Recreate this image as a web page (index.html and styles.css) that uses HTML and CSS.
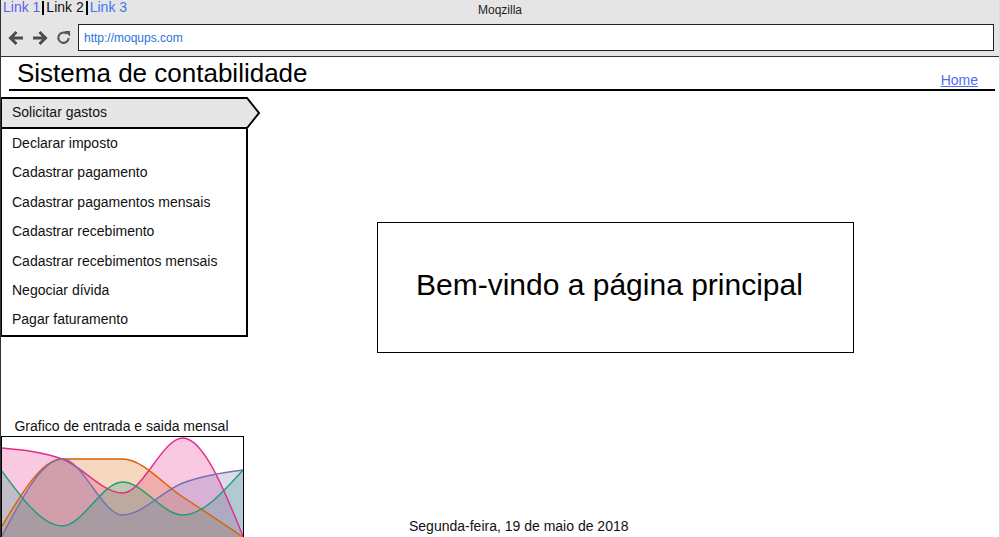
FILE: index.html
```html
<!DOCTYPE html>
<html lang="pt">
<head>
    <meta charset="UTF-8">
    <title>Sistema de contabilidade</title>
    <link rel="stylesheet" href="styles.css">
</head>
<body>

<div class="window">
    <div class="chrome">
        <div class="chrome-top">
            <div class="tabs">
                <a href="#" class="tab tab-visited">Link 1</a><span class="sep"></span><span class="tab tab-current">Link 2</span><span class="sep"></span><a href="#" class="tab">Link 3</a>
            </div>
            <div class="chrome-title">Moqzilla</div>
            <div></div>
        </div>
        <div class="chrome-nav">
            <svg class="nav-icon" viewBox="0 0 16 16"><path d="M8.5 2 L2.5 8 L8.5 14 M2.5 8 H15" fill="none" stroke="#4d4d4d" stroke-width="3"/></svg>
            <svg class="nav-icon" viewBox="0 0 16 16"><path d="M7.5 2 L13.5 8 L7.5 14 M13.5 8 H1" fill="none" stroke="#4d4d4d" stroke-width="3"/></svg>
            <svg class="nav-icon reload" viewBox="0 0 16 16"><path d="M13.5 8.5 A5.5 5.5 0 1 1 11.5 4" fill="none" stroke="#555" stroke-width="2.2"/><polygon points="9,1 15,1 15,7" fill="#555"/></svg>
            <div class="address">http://moqups.com</div>
        </div>
    </div>

    <header class="page-header">
        <h1>Sistema de contabilidade</h1>
        <a href="#" class="home-link">Home</a>
    </header>

    <div class="page-body">
        <aside class="sidebar">
            <div class="menu-active">
                <svg class="menu-shape" viewBox="0 0 260 32"><polygon points="0,1 246,1 258,16 246,31 0,31" fill="#e6e6e6" stroke="#000" stroke-width="2"/></svg>
                <span>Solicitar gastos</span>
            </div>
            <ul class="menu">
                <li>Declarar imposto</li>
                <li>Cadastrar pagamento</li>
                <li>Cadastrar pagamentos mensais</li>
                <li>Cadastrar recebimento</li>
                <li>Cadastrar recebimentos mensais</li>
                <li>Negociar dívida</li>
                <li>Pagar faturamento</li>
            </ul>

            <div class="chart-title">Grafico de entrada e saida mensal</div>
            <div class="chart">
                <svg width="241" height="100" viewBox="0 0 242 100" preserveAspectRatio="none">
                    <!-- areas -->
                    <path class="area pink" d="M0,11 C20.17,12.8 40.33,14.7 60.5,22 C80.67,29.3 100.83,56 121,56 C141.17,56 161.33,1 181.5,1 C201.67,1 221.83,49.5 242,99 L242,100 L0,100 Z"/>
                    <path class="area orange" d="M0,89 C20.17,55.5 40.33,22 60.5,22 C80.67,22 100.83,22 121,22 C141.17,22 161.33,47 181.5,60 C201.67,73 221.83,86.5 242,100 L242,100 L0,100 Z"/>
                    <path class="area green" d="M0,34 C20.17,61.5 40.33,89 60.5,89 C80.67,89 100.83,45 121,45 C141.17,45 161.33,78 181.5,78 C201.67,78 221.83,55.5 242,33 L242,100 L0,100 Z"/>
                    <path class="area purple" d="M0,99 C20.17,60.5 40.33,22 60.5,22 C80.67,22 100.83,78 121,78 C141.17,78 161.33,53.5 181.5,46 C201.67,38.5 221.83,35.7 242,33 L242,100 L0,100 Z"/>
                    <!-- lines -->
                    <path class="line pink" d="M0,11 C20.17,12.8 40.33,14.7 60.5,22 C80.67,29.3 100.83,56 121,56 C141.17,56 161.33,1 181.5,1 C201.67,1 221.83,49.5 242,99"/>
                    <path class="line orange" d="M0,89 C20.17,55.5 40.33,22 60.5,22 C80.67,22 100.83,22 121,22 C141.17,22 161.33,47 181.5,60 C201.67,73 221.83,86.5 242,100"/>
                    <path class="line green" d="M0,34 C20.17,61.5 40.33,89 60.5,89 C80.67,89 100.83,45 121,45 C141.17,45 161.33,78 181.5,78 C201.67,78 221.83,55.5 242,33"/>
                    <path class="line purple" d="M0,99 C20.17,60.5 40.33,22 60.5,22 C80.67,22 100.83,78 121,78 C141.17,78 161.33,53.5 181.5,46 C201.67,38.5 221.83,35.7 242,33"/>
                </svg>
            </div>
        </aside>

        <main class="main">
            <div class="welcome">Bem-vindo a página principal</div>
            <p class="date">Segunda-feira, 19 de maio de 2018</p>
        </main>
    </div>
</div>

</body>
</html>
```

FILE: styles.css
```css
body {
    margin: 0;
    font-family: "Liberation Sans", Arial, sans-serif;
    color: #111;
    background: #fff;
    overflow: hidden;
}
.window {
    height: 537px;
    box-sizing: border-box;
    border-left: 1px solid #333;
    border-right: 1px solid #dcdcdc;
    overflow: hidden;
}

/* browser chrome */
.chrome {
    height: 57px;
    box-sizing: border-box;
    background: #e5e5e5;
    border-bottom: 1px solid #333;
}
.chrome-top {
    display: grid;
    grid-template-columns: 1fr auto 1fr;
    height: 24px;
}
.tabs {
    display: flex;
    align-items: flex-start;
    padding-left: 2px;
    font-size: 14px;
    line-height: 14px;
}
.tab {
    color: #3c78f4;
    text-decoration: none;
}
.tab-visited {
    color: #5d5ff0;
}
.tab-current {
    color: #111;
}
.sep {
    width: 2px;
    height: 14px;
    background: #000;
    margin: 1px 2px 0;
}
.chrome-title {
    font-size: 12px;
    line-height: 14px;
    padding-top: 3px;
    color: #222;
}
.chrome-nav {
    display: flex;
    align-items: center;
    height: 27px;
    padding-left: 7px;
}
.nav-icon {
    width: 16px;
    height: 16px;
    margin-right: 8px;
    flex: none;
}
.nav-icon.reload {
    width: 15px;
    height: 15px;
    margin-right: 7px;
}
.address {
    flex: 1;
    height: 27px;
    box-sizing: border-box;
    margin-right: 5px;
    padding-left: 5px;
    border: 1px solid #222;
    background: #fff;
    display: flex;
    align-items: center;
    font-size: 12px;
    color: #2a73de;
}

/* page header */
.page-header {
    display: flex;
    justify-content: space-between;
    align-items: flex-end;
    margin: 2px 4px 0 8px;
    padding: 0 17px 2px 8px;
    border-bottom: 2px solid #000;
}
.page-header h1 {
    margin: 0;
    font-size: 26px;
    line-height: 28px;
    font-weight: normal;
    color: #000;
}
.home-link {
    font-size: 14px;
    line-height: 17px;
    color: #4e6ef2;
    margin-bottom: -2px;
}

.page-body {
    display: flex;
    margin-top: 6px;
}

/* sidebar menu */
.sidebar {
    width: 260px;
    flex: none;
}
.menu-active {
    position: relative;
    height: 32px;
    box-sizing: border-box;
    display: flex;
    align-items: center;
    padding: 0 0 2px 11px;
    font-size: 14px;
}
.menu-shape {
    position: absolute;
    left: 0;
    top: 0;
    width: 260px;
    height: 32px;
}
.menu-active span {
    position: relative;
}
.menu {
    list-style: none;
    margin: 0;
    padding: 0;
    width: 247px;
    box-sizing: border-box;
    border: 2px solid #000;
    border-top: none;
    border-left-width: 1px;
}
.menu li {
    height: 29.4px;
    line-height: 29.4px;
    padding-left: 10px;
    font-size: 14px;
}

/* chart */
.chart-title {
    width: 241px;
    margin-top: 81px;
    text-align: center;
    font-size: 14px;
    line-height: 16px;
}
.chart {
    width: 243px;
    height: 110px;
    box-sizing: border-box;
    margin-top: 2px;
    border: 1px solid #000;
}
.chart svg {
    display: block;
}
.area {
    fill-opacity: 0.25;
    stroke: none;
}
.line {
    fill: none;
    stroke-width: 1.4;
}
.area.pink { fill: #e7298a; }
.area.orange { fill: #d95f02; }
.area.green { fill: #1b9e77; }
.area.purple { fill: #7570b3; }
.line.pink { stroke: #e7298a; }
.line.orange { stroke: #d95f02; }
.line.green { stroke: #1b9e77; }
.line.purple { stroke: #7570b3; }

/* main area */
.main {
    flex: 1;
}
.welcome {
    margin: 125px 0 0 116px;
    width: 477px;
    height: 131px;
    box-sizing: border-box;
    border: 1px solid #000;
    display: flex;
    align-items: center;
    padding: 0 0 6px 38px;
    font-size: 30px;
    color: #000;
}
.date {
    margin: 165px 0 0 148px;
    font-size: 14px;
    line-height: 16px;
}
```
